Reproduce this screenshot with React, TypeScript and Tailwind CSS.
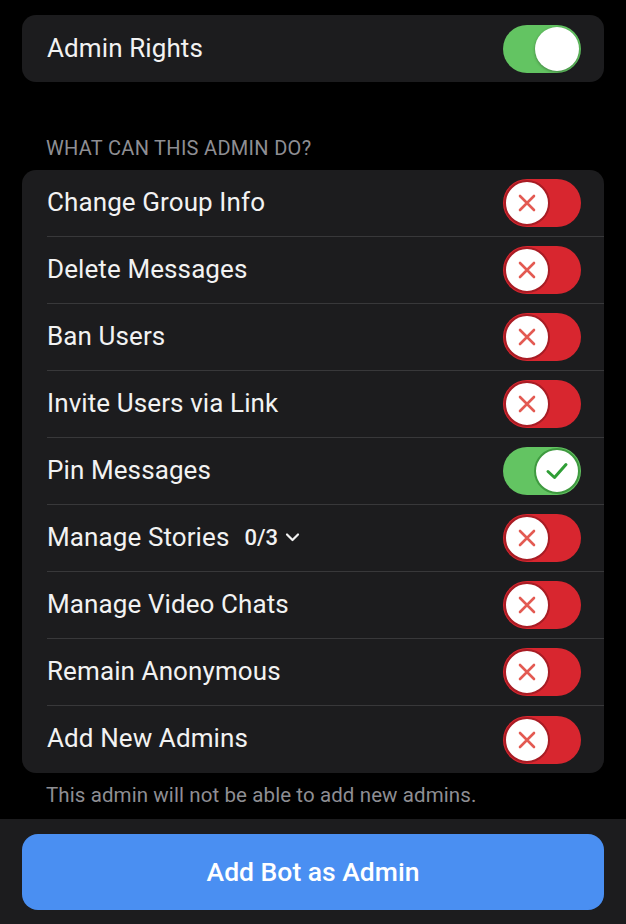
import React from "react";

const font = { fontFamily: "Roboto, 'Noto Sans', sans-serif" };

function Toggle({ on }: { on: boolean }) {
  if (on) {
    return (
      <div className="relative h-[48px] w-[78px] shrink-0 rounded-full bg-[#63c462]">
        <div className="absolute right-[2px] top-[2px] h-[44px] w-[44px] rounded-full bg-white shadow-[0_1px_3px_rgba(0,0,0,0.35)]" />
      </div>
    );
  }
  return (
    <div className="relative h-[48px] w-[78px] shrink-0 rounded-full bg-[#d8262f]">
      <div className="absolute left-[1px] top-[1px] flex h-[46px] w-[46px] items-center justify-center rounded-full border-[2px] border-[#a81c24] bg-white">
        <svg width="20" height="20" viewBox="0 0 20 20">
          <path d="M3 3 L17 17 M17 3 L3 17" stroke="#e35a52" strokeWidth="2.6" strokeLinecap="round" />
        </svg>
      </div>
    </div>
  );
}

function CheckToggle() {
  return (
    <div className="relative h-[48px] w-[78px] shrink-0 rounded-full bg-[#63c462]">
      <div className="absolute right-[1px] top-[1px] flex h-[46px] w-[46px] items-center justify-center rounded-full border-[2px] border-[#3f9a40] bg-white">
        <svg width="24" height="20" viewBox="0 0 24 20">
          <path d="M3 10.5 L9.5 16.5 L21 3.5" stroke="#2f9e36" strokeWidth="3" fill="none" strokeLinecap="round" strokeLinejoin="round" />
        </svg>
      </div>
    </div>
  );
}

type Row = { label: string; state: "x" | "check"; extra?: boolean };

const rows: Row[] = [
  { label: "Change Group Info", state: "x" },
  { label: "Delete Messages", state: "x" },
  { label: "Ban Users", state: "x" },
  { label: "Invite Users via Link", state: "x" },
  { label: "Pin Messages", state: "check" },
  { label: "Manage Stories", state: "x", extra: true },
  { label: "Manage Video Chats", state: "x" },
  { label: "Remain Anonymous", state: "x" },
  { label: "Add New Admins", state: "x" },
];

export default function App() {
  return (
    <div className="flex h-[924px] w-[626px] flex-col bg-black text-white" style={font}>
      <div className="flex-1 px-[22px] pt-[15px]">
        <div className="flex h-[67px] items-center justify-between rounded-[14px] bg-[#1c1c1e] pl-[25px] pr-[23px]">
          <span className="-mt-[1px] text-[26px] tracking-[0.1px] text-[#f2f2f2]">Admin Rights</span>
          <Toggle on={true} />
        </div>

        <div className="mt-[51px] pl-[24px] text-[20px] uppercase tracking-[0.3px] text-[#8e8e93]">
          What can this admin do?
        </div>

        <div className="mt-[7px] overflow-hidden rounded-[14px] bg-[#1c1c1e]">
          {rows.map((r, i) => (
            <div
              key={r.label}
              className={`flex items-stretch pl-[25px] ${i === 0 ? "h-[66px]" : i === rows.length - 1 ? "h-[68px]" : "h-[67px]"}`}
            >
              <div className={`flex flex-1 items-center justify-between pr-[23px] ${i > 0 ? "border-t border-[#38383a]" : ""}`}>
                <div className="-mt-[2px] flex items-center">
                  <span className="text-[26px] tracking-[0.1px] text-[#f2f2f2]">{r.label}</span>
                  {r.extra && (
                    <span className="ml-[15px] flex items-center text-[22px] font-medium text-[#f2f2f2]">
                      0/3
                      <svg className="ml-[7px]" width="15" height="10" viewBox="0 0 15 10">
                        <path d="M2 2.5 L7.5 8 L13 2.5" stroke="#f2f2f2" strokeWidth="2.2" fill="none" strokeLinecap="round" strokeLinejoin="round" />
                      </svg>
                    </span>
                  )}
                </div>
                {r.state === "x" ? <Toggle on={false} /> : <CheckToggle />}
              </div>
            </div>
          ))}
        </div>

        <div className="mt-[7px] pl-[24px] text-[20.5px] tracking-[0.1px] text-[#8e8e93]">
          This admin will not be able to add new admins.
        </div>
      </div>

      <div className="h-[105px] bg-[#1c1c1e] px-[22px] pt-[15px]">
        <button className="flex h-[76px] w-full items-center justify-center rounded-[16px] bg-[#4a8ff2] text-[26.5px] font-medium text-white" style={font}>
          Add Bot as Admin
        </button>
      </div>
    </div>
  );
}
